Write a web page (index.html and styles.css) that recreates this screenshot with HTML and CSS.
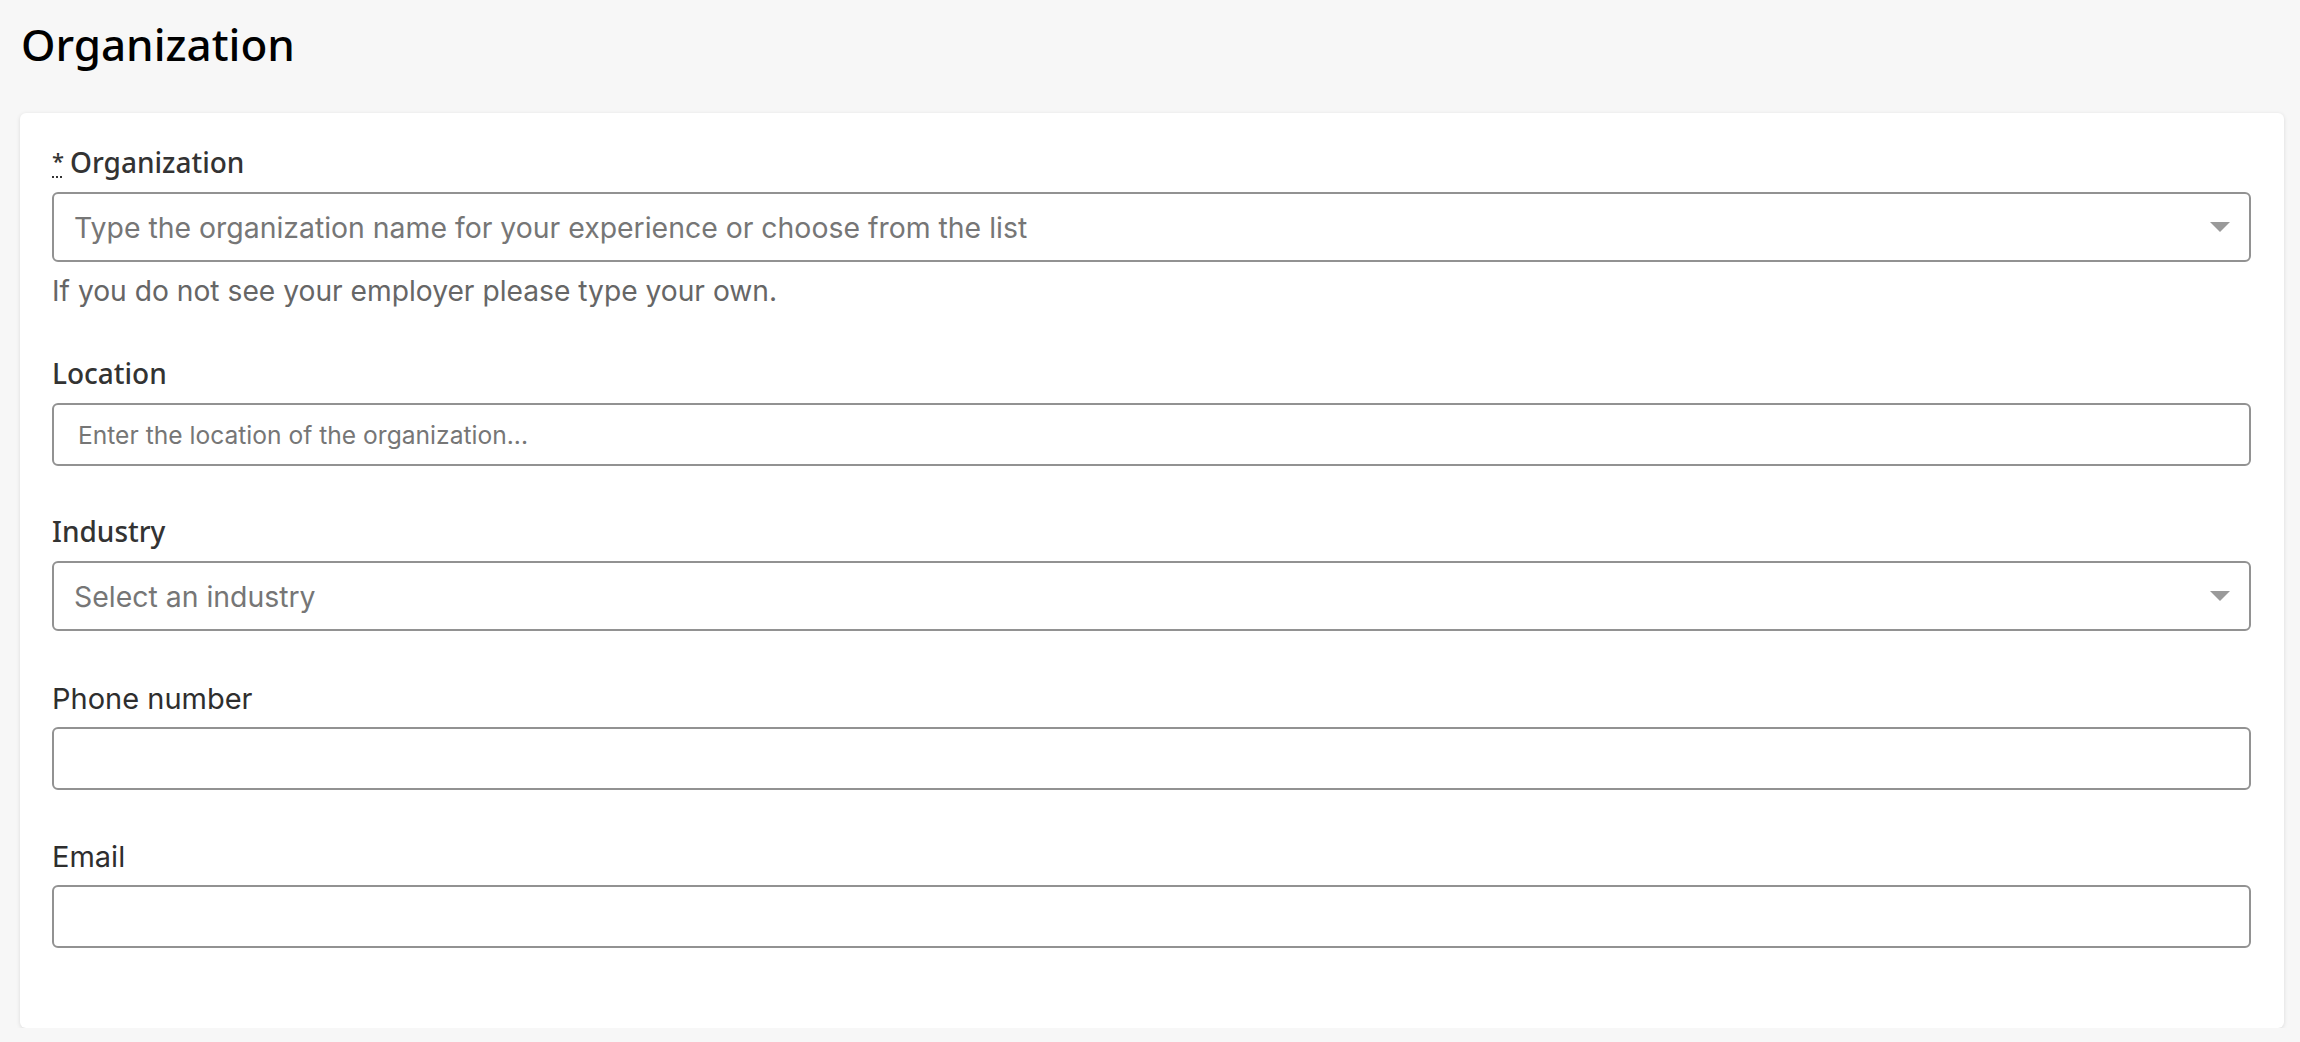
FILE: index.html
```html
<!DOCTYPE html>
<html lang="en">
<head>
<meta charset="utf-8">
<title>Organization</title>
<link rel="stylesheet" href="styles.css">
</head>
<body>
<div class="page">
  <h1 class="page-title">Organization</h1>
  <section class="card">
    <div class="field field-org">
      <label class="label label-plex" for="org"><abbr class="req" title="required">*</abbr>Organization</label>
      <div class="select-box">
        <input id="org" class="control control-lg" type="text" placeholder="Type the organization name for your experience or choose from the list">
        <svg class="caret" width="20" height="10" viewBox="0 0 20 10"><path d="M0 0 H20 L10 10 Z" fill="#9a9a9a"/></svg>
      </div>
      <p class="help">If you do not see your employer please type your own.</p>
    </div>
    <div class="field field-loc">
      <label class="label label-plex" for="loc">Location</label>
      <input id="loc" class="control control-md" type="text" placeholder="Enter the location of the organization...">
    </div>
    <div class="field field-ind">
      <label class="label label-plex" for="ind">Industry</label>
      <div class="select-box">
        <div id="ind" class="control control-lg select-text">Select an industry</div>
        <svg class="caret" width="20" height="10" viewBox="0 0 20 10"><path d="M0 0 H20 L10 10 Z" fill="#9a9a9a"/></svg>
      </div>
    </div>
    <div class="field field-phone">
      <label class="label label-arial" for="phone">Phone number</label>
      <input id="phone" class="control control-md" type="text">
    </div>
    <div class="field field-email">
      <label class="label label-arial" for="email">Email</label>
      <input id="email" class="control control-md" type="text">
    </div>
  </section>
</div>
</body>
</html>
```
FILE: styles.css
```css
* { box-sizing: border-box; }
html, body { margin: 0; padding: 0; }
body {
  background: #f7f7f7;
  font-family: "Noto Sans", "Liberation Sans", sans-serif;
  color: #333;
}
.page {
  padding: 0 16px 0 20px;
}
.page-title {
  margin: 0;
  padding: 14px 0 0 1px;
  height: 113px;
  font-family: "Noto Sans", sans-serif;
  font-weight: 500;
  font-size: 44px;
  line-height: 60px;
  color: #000;
}
.card {
  background: #fff;
  border-radius: 6px;
  box-shadow: 0 1px 4px rgba(0,0,0,0.12);
  padding: 30px 33px 80px 32px;
  display: flex;
  flex-direction: column;
}
.field {
  display: flex;
  flex-direction: column;
}
.label {
  display: block;
  font-size: 28px;
  line-height: 38px;
  color: #333;
  padding-top: 2px;
  margin-bottom: 9px;
}
.label-plex {
  font-family: "Noto Sans", sans-serif;
  font-weight: 500;
  font-size: 28px;
  padding-top: 0;
  margin-bottom: 11px;
}
.label-arial {
  font-family: Inter, "Liberation Sans", sans-serif;
  font-weight: 400;
  font-size: 29px;
  color: #2e2e2e;
}
.req {
  display: inline-block;
  font-size: 22px;
  line-height: 1;
  margin-right: 6px;
  vertical-align: 4px;
  text-decoration: underline dotted;
  text-underline-offset: 7px;
  text-decoration-thickness: 2px;
}
.select-box {
  position: relative;
}
.control {
  display: block;
  width: 100%;
  margin: 0;
  border: 2px solid #929292;
  border-radius: 6px;
  background: #fff;
  color: #333;
  outline: none;
  font-family: Inter, "Liberation Sans", sans-serif;
}
.control::placeholder { color: #767676; opacity: 1; }
.control-lg {
  height: 70px;
  padding: 0 60px 0 20px;
  font-size: 28.4px;
}
.control-md {
  height: 63px;
  padding: 0 24px;
  font-size: 24.6px;
}
.select-text {
  display: flex;
  align-items: center;
  color: #767676;
  padding-left: 20px;
}
.caret {
  position: absolute;
  right: 21px;
  top: 30px;
}
.help {
  margin: 11px 0 0 0;
  font-family: Inter, "Liberation Sans", sans-serif;
  font-size: 28.2px;
  line-height: 36px;
  color: #666;
}
.field-loc { margin-top: 45px; }
.field-ind { margin-top: 46px; }
.field-phone { margin-top: 46.5px; }
.field-email { margin-top: 46.5px; }
```
